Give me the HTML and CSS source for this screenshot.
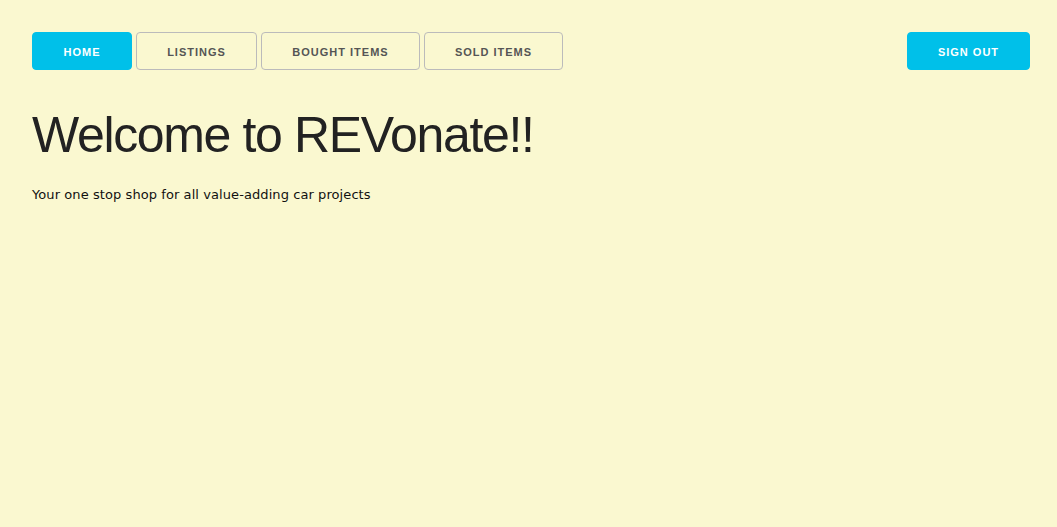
FILE: index.html
```html
<!DOCTYPE html>
<html>
<head>
<meta charset="utf-8">
<link rel="stylesheet" href="styles.css">
</head>
<body>
<div class="page">
  <nav class="nav">
    <div class="nav-left">
      <a class="btn btn-primary">Home</a>
      <a class="btn">Listings</a>
      <a class="btn">Bought Items</a>
      <a class="btn">Sold Items</a>
    </div>
    <a class="btn btn-primary">Sign Out</a>
  </nav>
  <h1 class="title">Welcome to REVonate!!</h1>
  <p class="lead">Your one stop shop for all value-adding car projects</p>
</div>
</body>
</html>
```
FILE: styles.css
```css
html, body {
  margin: 0;
  padding: 0;
  background: #faf8d0;
  height: 100%;
}
body {
  font-family: "DejaVu Sans", Verdana, sans-serif;
  color: #222;
}
.page {
  padding: 32px 27px 0 32px;
}
.nav {
  display: flex;
  justify-content: space-between;
  align-items: center;
}
.nav-left {
  display: flex;
  gap: 4px;
}
.btn {
  box-sizing: border-box;
  display: inline-flex;
  align-items: center;
  justify-content: center;
  height: 38px;
  padding: 1px 30px 0;
  border: 1px solid #bbb;
  border-radius: 4px;
  font-family: "Liberation Sans", Arial, sans-serif;
  font-size: 11px;
  font-weight: 700;
  letter-spacing: 1px;
  text-transform: uppercase;
  color: #555;
  background: transparent;
  white-space: nowrap;
}
.btn-primary {
  background: #00c0e9;
  border-color: #00c0e9;
  color: #fff;
}
.nav-left .btn:nth-child(1) { width: 100px; }
.nav-left .btn:nth-child(2) { width: 121px; }
.nav-left .btn:nth-child(3) { width: 159px; }
.nav-left .btn:nth-child(4) { width: 139px; }
.nav > .btn { width: 123px; }
.title {
  margin: 35px 0 20px;
  font-family: "Liberation Sans", Arial, sans-serif;
  font-size: 50px;
  font-weight: 400;
  line-height: 60px;
  letter-spacing: -1.35px;
  color: #222;
}
.lead {
  margin: 0;
  font-size: 13px;
  line-height: 20px;
  letter-spacing: 0.08px;
  color: #111;
}
```
